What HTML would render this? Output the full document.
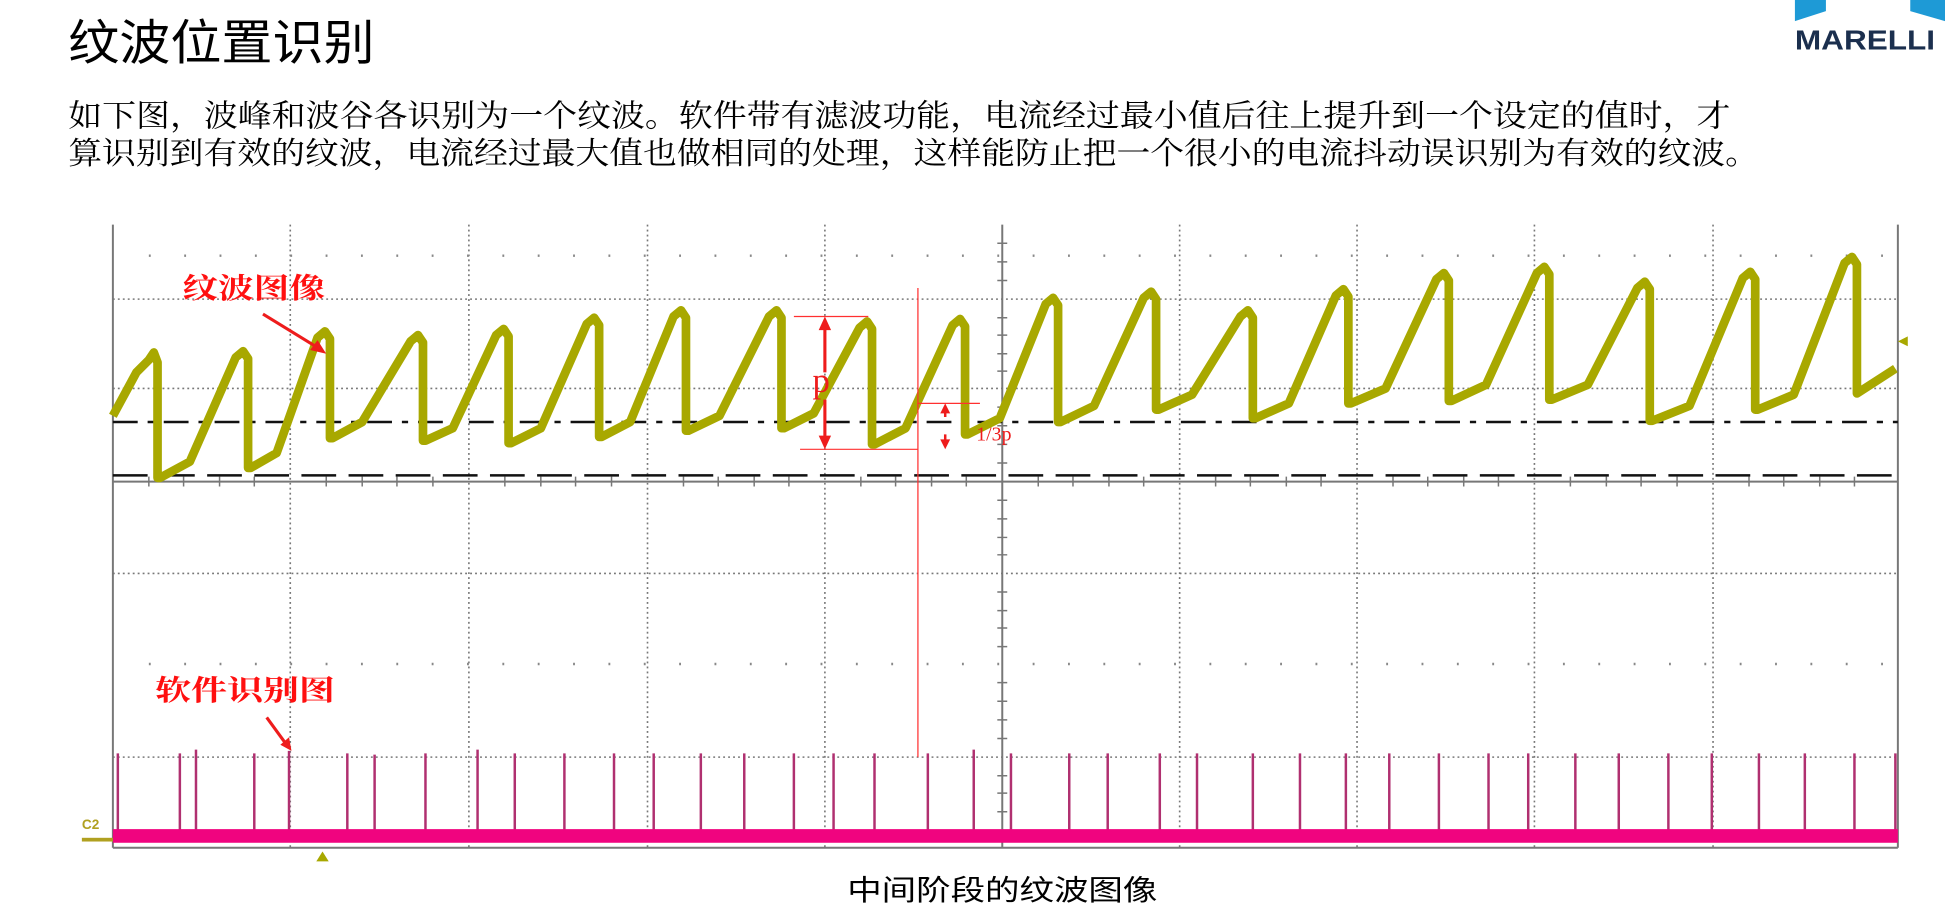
<!DOCTYPE html>
<html><head><meta charset="utf-8"><style>
html,body{margin:0;padding:0;background:#fff;width:1945px;height:916px;overflow:hidden}
svg{display:block}
</style></head><body>
<svg width="1945" height="916" viewBox="0 0 1568 738" preserveAspectRatio="none" xmlns="http://www.w3.org/2000/svg">
<!-- logo -->
<polygon points="1447,0 1472,0 1472,9 1447,17" fill="#1e9ad6"/>
<polygon points="1540,0 1568,0 1568,17 1540,9" fill="#1e9ad6"/>
<text x="1447" y="40" font-family="Liberation Sans, sans-serif" font-weight="bold" font-size="22" fill="#1b2f4e" textLength="113" lengthAdjust="spacingAndGlyphs">MARELLI</text>
<!-- title & paragraph -->
<text x="55" y="48" font-family="Liberation Sans, 'Noto Sans CJK SC', sans-serif" font-size="39" fill="#000" textLength="247" lengthAdjust="spacingAndGlyphs">纹波位置识别</text>
<text x="55" y="102" font-family="Liberation Serif, 'Noto Serif CJK SC', serif" font-size="25" fill="#000" textLength="1340" lengthAdjust="spacingAndGlyphs">如下图，波峰和波谷各识别为一个纹波。软件带有滤波功能，电流经过最小值后往上提升到一个设定的值时，才</text>
<text x="55" y="132" font-family="Liberation Serif, 'Noto Serif CJK SC', serif" font-size="25" fill="#000" textLength="1363" lengthAdjust="spacingAndGlyphs">算识别到有效的纹波，电流经过最大值也做相同的处理，这样能防止把一个很小的电流抖动误识别为有效的纹波。</text>
<!-- grid -->
<g stroke="#777" stroke-width="1.3" stroke-dasharray="1.5,2.5" fill="none">
<path d="M234,181V683M378,181V683M522,181V683M665,181V683M951,181V683M1094,181V683M1237,181V683M1381,181V683"/>
<path d="M91,241H1530M91,313H1530M91,462H1530M91,610H1530"/>
</g>
<g stroke="#888" stroke-width="2" stroke-dasharray="1.5,27" fill="none">
<path d="M120,206H1530M120,535H1530"/>
</g>
<g stroke="#777" stroke-width="1.6" fill="none">
<path d="M91,181V683M1530,181V683M91,683H1530M91,388H1530M808,181V683"/>
</g>
<g stroke="#777" stroke-width="1.2">
<path d="M120,384V392M148,384V392M177,384V392M205,384V392M263,384V392M292,384V392M320,384V392M349,384V392M407,384V392M436,384V392M464,384V392M493,384V392M551,384V392M579,384V392M608,384V392M636,384V392M694,384V392M722,384V392M751,384V392M779,384V392M837,384V392M865,384V392M894,384V392M922,384V392M980,384V392M1008,384V392M1037,384V392M1065,384V392M1123,384V392M1151,384V392M1180,384V392M1208,384V392M1266,384V392M1295,384V392M1323,384V392M1352,384V392M1410,384V392M1438,384V392M1467,384V392M1495,384V392"/>
<path d="M804,196H812M804,211H812M804,226H812M804,256H812M804,270H812M804,285H812M804,299H812M804,328H812M804,343H812M804,358H812M804,373H812M804,403H812M804,418H812M804,433H812M804,447H812M804,477H812M804,492H812M804,506H812M804,521H812M804,550H812M804,565H812M804,580H812M804,595H812M804,625H812M804,639H812M804,654H812M804,669H812"/>
</g>
<!-- dashed lines -->
<path d="M91,340H1530" stroke="#111" stroke-width="2" stroke-dasharray="20,8,5,8"/>
<path d="M91,383H1530" stroke="#111" stroke-width="2" stroke-dasharray="28,10"/>
<!-- waveform -->
<path fill="none" stroke="#a8a800" stroke-width="7" stroke-linejoin="round" d="M91,335 L110,300 L120,290 L124,284 L127,292 L127,385 L129,385 L153,372 L190,288 L196,283 L200,289 L200,377 L202,377 L223,365 L256,272 L262,267 L266,273 L266,353 L268,353 L292,340 L331,275 L337,270 L341,276 L341,355 L343,355 L365,345 L400,270 L406,265 L410,271 L410,357 L412,357 L436,345 L473,261 L479,256 L483,262 L483,352 L485,352 L508,340 L543,255 L549,250 L553,256 L553,347 L555,347 L580,335 L620,255 L626,250 L630,256 L630,345 L632,345 L656,333 L693,264 L699,259 L703,265 L703,358 L705,358 L730,345 L768,262 L774,257 L778,263 L778,350 L780,350 L806,337 L843,245 L849,240 L853,246 L853,340 L855,340 L882,327 L922,240 L928,235 L932,241 L932,330 L934,330 L961,318 L1000,255 L1006,250 L1010,256 L1010,337 L1012,337 L1039,325 L1077,238 L1083,233 L1087,239 L1087,325 L1089,325 L1117,313 L1158,225 L1164,220 L1168,226 L1168,323 L1170,323 L1198,310 L1239,220 L1245,215 L1249,221 L1249,322 L1251,322 L1280,310 L1320,232 L1326,227 L1330,233 L1330,339 L1332,339 L1362,327 L1405,224 L1411,219 L1415,225 L1415,330 L1417,330 L1446,318 L1487,212 L1493,207 L1497,213 L1497,317 L1528,297"/>
<polygon points="1530,275 1538,271 1538,279" fill="#a8a800"/>
<!-- pulses -->
<path stroke="#b03070" stroke-width="2" d="M95,672V607M145,672V607M158,672V604M205,672V607M233,672V605M280,672V607M302,672V608M343,672V607M385,672V604M415,672V607M455,672V607M495,672V607M527,672V607M565,672V607M600,672V607M640,672V607M672,672V607M705,672V607M748,672V607M785,672V604M815,672V607M862,672V607M893,672V607M935,672V607M965,672V607M1010,672V607M1048,672V607M1085,672V607M1120,672V607M1160,672V607M1200,672V607M1232,672V607M1270,672V607M1305,672V607M1345,672V607M1380,672V607M1418,672V607M1455,672V607M1495,672V607M1528,672V607"/>
<rect x="91" y="668" width="1439" height="11" fill="#f0047f"/>
<text x="66" y="668" font-family="Liberation Sans, sans-serif" font-size="11" font-weight="bold" fill="#b0a020">C2</text>
<rect x="66" y="675" width="25" height="3" fill="#b0a020"/>
<polygon points="260,686 255,694 265,694" fill="#a8a800"/>
<!-- red annotations -->
<g font-family="Liberation Serif, 'Noto Serif CJK SC', serif" fill="#ff1010" font-weight="bold">
<text x="147" y="240" font-size="23" textLength="115" lengthAdjust="spacingAndGlyphs">纹波图像</text>
<text x="125" y="564" font-size="23" textLength="145" lengthAdjust="spacingAndGlyphs">软件识别图</text>
</g>
<g stroke="#ee1c1c" stroke-width="2.5" fill="none">
<path d="M212,253L256,280"/>
<path d="M215,578L231,600"/>
</g>
<polygon points="263,285 250,282 256,274" fill="#ee1c1c"/>
<polygon points="235,605 226,600 233,594" fill="#ee1c1c"/>
<g stroke="#ff3030" stroke-width="1" fill="none">
<path d="M640,255H700M645,362H740M740,232V610M740,325H790"/>
</g>
<path d="M665,262V300M665,322V355" stroke="#ee1c1c" stroke-width="2.5"/>
<polygon points="665,255 660,266 670,266" fill="#ee1c1c"/>
<polygon points="665,362 660,351 670,351" fill="#ee1c1c"/>
<path d="M762,330V336M762,350V358" stroke="#ee1c1c" stroke-width="2"/>
<polygon points="762,325 758,333 766,333" fill="#ee1c1c"/>
<polygon points="762,362 758,354 766,354" fill="#ee1c1c"/>
<text x="655" y="316" font-family="Liberation Serif, serif" font-size="28" fill="#ee1c1c">p</text>
<text x="787" y="355" font-family="Liberation Serif, serif" font-size="16" fill="#ee1c1c">1/3p</text>
<!-- caption -->
<text x="683" y="725" font-family="Liberation Sans, 'Noto Sans CJK SC', sans-serif" font-size="23" fill="#000" textLength="250" lengthAdjust="spacingAndGlyphs">中间阶段的纹波图像</text>
</svg>
</body></html>
